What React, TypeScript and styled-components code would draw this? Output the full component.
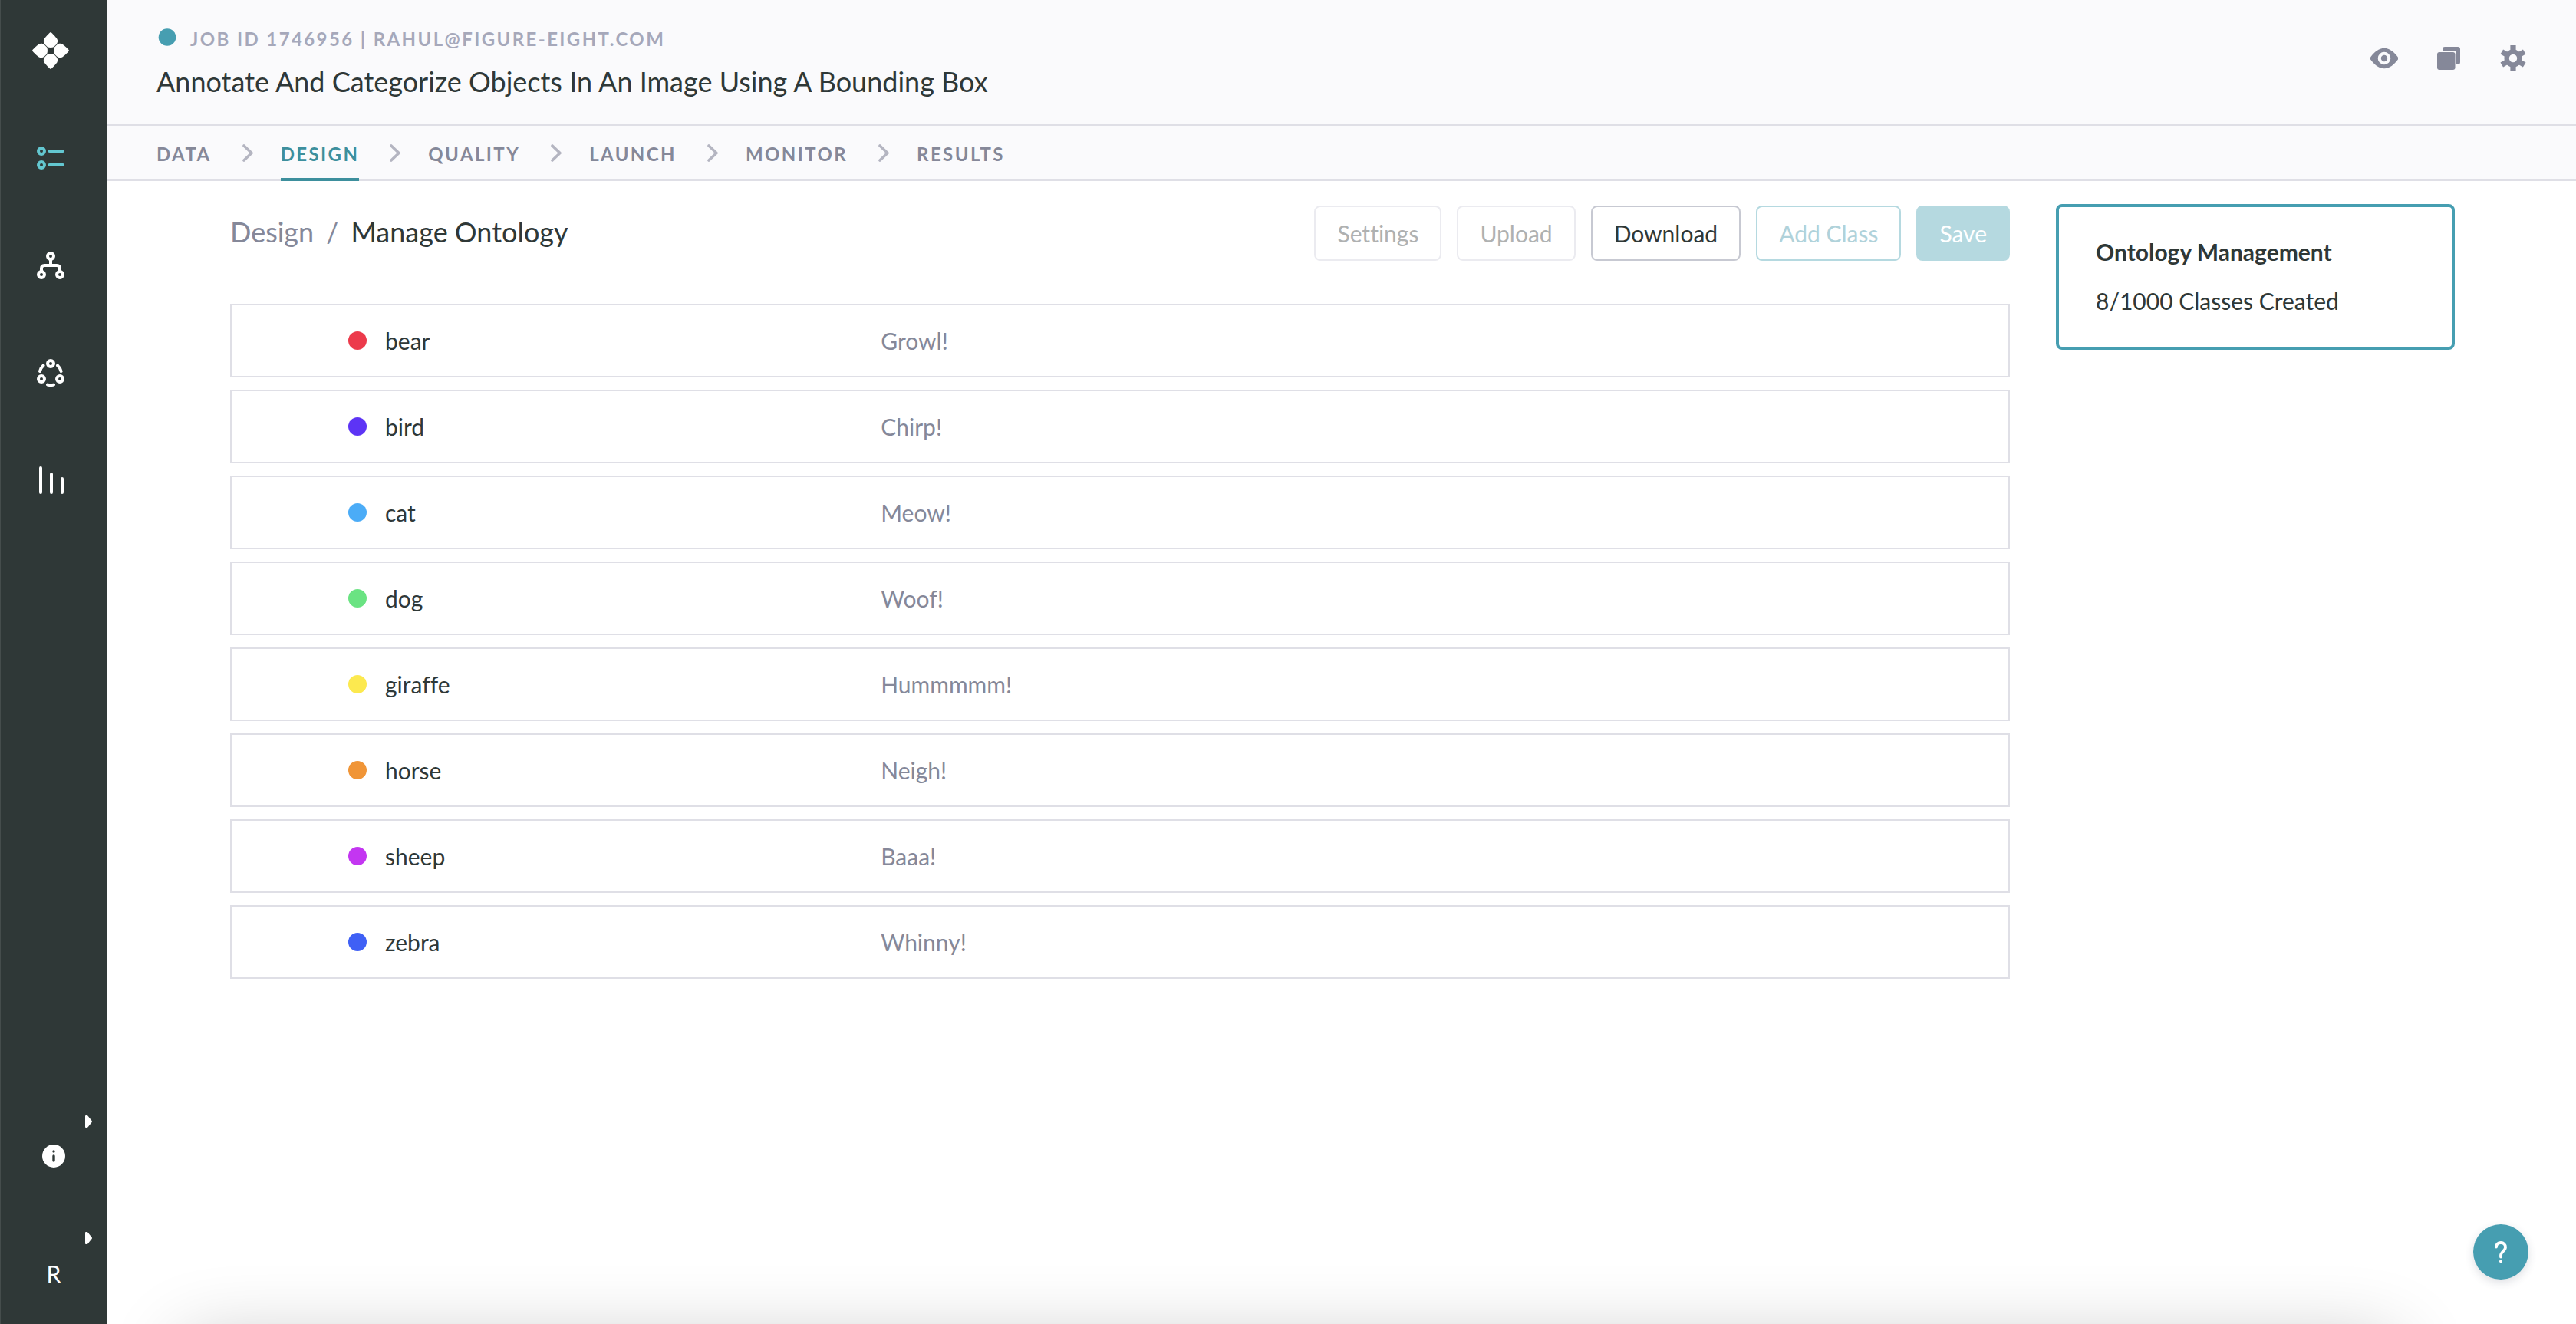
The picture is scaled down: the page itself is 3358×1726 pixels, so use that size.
import React from "react";
import styled, { createGlobalStyle } from "styled-components";

const color = {
  ink: "#2f3837",
  muted: "#858899",
  faint: "#a6a8ba",
  line: "#dfdfe6",
  chrome: "#fafafc",
  teal: "#469eb1",
  tealDark: "#3d8f9d",
  tealPale: "#b5d9e0",
  aqua: "#63c7d0",
};

const GlobalStyle = createGlobalStyle`
  *, *::before, *::after { box-sizing: border-box; }
  body {
    margin: 0;
    background: #fff;
    color: ${color.ink};
    font-family: Lato, "Liberation Sans", sans-serif;
    font-size: 30px;
    line-height: 36px;
    font-variant-ligatures: no-common-ligatures;
  }
  a { color: inherit; text-decoration: none; }
  button { font: inherit; font-variant-ligatures: inherit; cursor: pointer; }
  h1, h2, p, ul, ol { margin: 0; padding: 0; }
  ul, ol { list-style: none; }
  svg { display: block; }
`;

const Shell = styled.div`
  display: grid;
  grid-template-columns: 140px minmax(0, 1fr);
  min-height: 100vh;
`;

/* ---------- Sidebar ---------- */

const Sidebar = styled.aside`
  display: flex;
  flex-direction: column;
  justify-content: space-between;
  height: 100vh;
  position: sticky;
  top: 0;
  padding: 42px 0 50px;
  background: ${color.ink};
  box-shadow: inset 1px 0 #454d4c;
  color: #fff;
`;

const MainLinks = styled.nav`
  display: flex;
  flex-direction: column;
  align-items: center;
  gap: 104px;
  padding-right: 8px;
`;

const Brand = styled.a`
  margin-bottom: -6px;
`;

const SideLink = styled.a<{ $active?: boolean }>`
  color: ${(p) => (p.$active ? color.aqua : "#fff")};
`;

const Account = styled.div`
  display: flex;
  flex-direction: column;
  gap: 84px;
`;

const AccountButton = styled.button`
  display: grid;
  justify-items: center;
  gap: 22px;
  width: 100%;
  padding: 0;
  border: 0;
  background: none;
  color: #fff;
  line-height: 32px;
`;

const Caret = styled.svg`
  justify-self: end;
  margin-right: 20px;
`;

/* ---------- Header ---------- */

const Header = styled.header`
  display: flex;
  justify-content: space-between;
  padding: 36px 64px 34px;
  background: ${color.chrome};
  border-bottom: 2px solid ${color.line};
`;

const Heading = styled.div`
  display: flex;
  flex-direction: column;
  gap: 18px;
`;

const JobLine = styled.p`
  display: flex;
  gap: 16px;
  color: ${color.faint};
  font-size: 24px;
  font-weight: 700;
  line-height: 30px;
  letter-spacing: 0.1em;
`;

const Title = styled.h1`
  font-size: 36px;
  font-weight: 400;
  line-height: 44px;
`;

const HeaderActions = styled.div`
  display: flex;
  align-items: flex-start;
  gap: 48px;
  padding-top: 22px;
`;

const IconButton = styled.button`
  padding: 0;
  border: 0;
  background: none;
  color: ${color.muted};
`;

const Steps = styled.ol`
  display: flex;
  height: 72px;
  padding: 0 64px;
  background: ${color.chrome};
  box-shadow: inset 0 -2px ${color.line};
`;

const Step = styled.li`
  display: flex;
  align-items: center;
`;

const StepLink = styled.a<{ $active?: boolean }>`
  display: flex;
  align-items: center;
  height: 72px;
  padding-top: 6px;
  border-bottom: 4px solid ${(p) => (p.$active ? color.tealDark : "transparent")};
  color: ${(p) => (p.$active ? color.tealDark : color.muted)};
  font-size: 24px;
  font-weight: 700;
  line-height: 30px;
  letter-spacing: 0.1em;
`;

const StepArrow = styled.svg`
  margin: 0 36px 0 40px;
`;

/* ---------- Content ---------- */

const Main = styled.main`
  display: flex;
  align-items: flex-start;
  gap: 60px;
  padding: 30px 158px 120px 160px;
`;

const Ontology = styled.section`
  flex: 1;
  min-width: 0;
  padding-top: 2px;
`;

const Toolbar = styled.div`
  display: flex;
  align-items: baseline;
  justify-content: space-between;
  margin-bottom: 56px;
`;

const Crumbs = styled.nav`
  display: flex;
  gap: 16px;
  color: ${color.muted};
  font-size: 36px;
  line-height: 44px;
`;

const Current = styled.span`
  color: ${color.ink};
`;

const Actions = styled.div`
  display: flex;
  gap: 20px;
`;

type Tone = "quiet" | "plain" | "outline" | "solid";

const tones: Record<Tone, { text: string; edge: string; fill: string }> = {
  quiet: { text: "#afb1b1", edge: "#ebebf0", fill: "#fff" },
  plain: { text: color.ink, edge: "#c7c9d2", fill: "#fff" },
  outline: { text: "#b0d2da", edge: color.tealPale, fill: "#fff" },
  solid: { text: "#fff", edge: color.tealPale, fill: color.tealPale },
};

const Button = styled.button<{ $tone: Tone }>`
  height: 72px;
  padding: 0 28px;
  border: 2px solid ${(p) => tones[p.$tone].edge};
  border-radius: 8px;
  background: ${(p) => tones[p.$tone].fill};
  color: ${(p) => tones[p.$tone].text};
`;

const ClassList = styled.ul`
  display: grid;
  gap: 16px;
`;

const ClassRow = styled.li`
  display: grid;
  grid-template-columns: minmax(0, 19fr) minmax(0, 33fr);
  align-items: center;
  height: 96px;
  border: 2px solid ${color.line};
`;

const ClassName = styled.div`
  display: flex;
  align-items: center;
  gap: 24px;
  padding-left: 152px;
`;

const Swatch = styled.span<{ $fill: string }>`
  width: 24px;
  height: 24px;
  border-radius: 50%;
  background: ${(p) => p.$fill};
`;

const Description = styled.p`
  color: ${color.muted};
`;

const Summary = styled.aside`
  display: grid;
  gap: 28px;
  width: 520px;
  padding: 40px 48px 42px;
  border: 4px solid ${color.teal};
  border-radius: 8px;
`;

const SummaryTitle = styled.h2`
  font-size: 30px;
  font-weight: 700;
`;

/* ---------- Overlays ---------- */

const BottomShade = styled.div`
  position: fixed;
  left: 240px;
  right: 236px;
  bottom: -124px;
  height: 100px;
  box-shadow: 0 0 100px rgba(0, 0, 0, 0.24);
  pointer-events: none;
`;

const HelpButton = styled.button`
  position: fixed;
  right: 62px;
  bottom: 58px;
  display: grid;
  place-items: center;
  width: 72px;
  height: 72px;
  padding: 0;
  border: 0;
  border-radius: 50%;
  background: ${color.teal};
  box-shadow: 0 4px 12px rgba(48, 56, 80, 0.16);
`;

/* ---------- Icons ---------- */

const Logo = () => (
  <svg width="48" height="48" viewBox="0 0 48 48" fill="currentColor" aria-hidden="true">
    {[0, 90, 180, 270].map((turn) => (
      <path
        key={turn}
        transform={`rotate(${turn} 24 24)`}
        d="M24 0C25 0 31 6.6 32.4 8.8C33.7 10.9 33.4 13.6 31.4 16L28.4 19C26 20.300 22 20.300 19.600 19L16.6 16C14.6 13.6 14.3 10.9 15.6 8.8C17 6.6 23 0 24 0Z"
      />
    ))}
  </svg>
);

const ListIcon = () => (
  <svg width="36" height="36" viewBox="0 0 36 36" fill="none" stroke="currentColor" strokeWidth="4" aria-hidden="true">
    <circle cx="6" cy="9" r="4" />
    <circle cx="6" cy="27" r="4" />
    <path d="M16.500 9H34M16.500 27H34" strokeLinecap="round" />
  </svg>
);

const TreeIcon = () => (
  <svg width="36" height="36" viewBox="0 0 36 36" fill="none" stroke="currentColor" strokeWidth="4" aria-hidden="true">
    <circle cx="18" cy="6" r="4" />
    <circle cx="6" cy="30" r="4" />
    <circle cx="30" cy="30" r="4" />
    <path d="M18 10V18M6 26V22Q6 18 10 18H26Q30 18 30 22V26" />
  </svg>
);

const CycleIcon = () => (
  <svg width="36" height="36" viewBox="0 0 36 36" fill="none" stroke="currentColor" strokeWidth="4" aria-hidden="true">
    <circle cx="18" cy="6" r="4" />
    <circle cx="6" cy="26" r="4" />
    <circle cx="30" cy="26" r="4" />
    <path d="M8.500 8.500Q5 11.500 4 16M27 8.500Q30.500 11.500 31.600 16M14 33.600Q18 34.600 22 33.600" strokeLinecap="round" />
  </svg>
);

const BarsIcon = () => (
  <svg width="36" height="36" viewBox="0 0 36 36" fill="none" stroke="currentColor" strokeWidth="4" strokeLinecap="round" aria-hidden="true">
    <path d="M5 2V34M19 10V34M33 16V34" />
  </svg>
);

const InfoIcon = () => (
  <svg width="30" height="30" viewBox="0 0 30 30" aria-hidden="true">
    <circle cx="15" cy="15" r="15" fill="currentColor" />
    <circle cx="15" cy="9" r="1.700" fill={color.ink} />
    <path d="M15 15V21" stroke={color.ink} strokeWidth="3.400" strokeLinecap="round" />
  </svg>
);

const CaretIcon = () => (
  <Caret width="9" height="16" viewBox="0 0 9 16" fill="currentColor" aria-hidden="true">
    <path d="M0 1Q0 0 1 0H2Q3 0 3.600 .7L8.600 7Q9.300 8 8.600 9L3.600 15.300Q3 16 2 16H1Q0 16 0 15Z" />
  </Caret>
);

const EyeIcon = () => (
  <svg width="36" height="36" viewBox="0 0 36 36" aria-hidden="true">
    <path
      fill="currentColor"
      fillRule="evenodd"
      d="M18 4.700C25 4.700 31 10 35.500 16Q37 18 35.500 20C31 26 25 31.300 18 31.300S5 26 .5 20Q-1 18 .5 16C5 10 11 4.700 18 4.700ZM18 9.700A8.300 8.300 0 1 0 18 26.300A8.300 8.300 0 1 0 18 9.700ZM18 13.800A4.200 4.200 0 1 1 18 22.200A4.200 4.200 0 1 1 18 13.800Z"
    />
  </svg>
);

const CopyIcon = () => (
  <svg width="36" height="36" viewBox="0 0 36 36" fill="currentColor" aria-hidden="true">
    <rect x="3" y="10" width="23.500" height="23" rx="3" />
    <path d="M10 8V6Q10 3 13 3H30Q33 3 33 6V23Q33 26 30 26H28V11Q28 8 25 8Z" />
  </svg>
);

const GearIcon = () => (
  <svg width="36" height="36" viewBox="0 0 36 36" aria-hidden="true">
    <g fill="currentColor">
      {[0, 60, 120].map((turn) => (
        <rect key={turn} x="14.400" y="1" width="7.200" height="34" transform={`rotate(${turn} 18 18)`} />
      ))}
      <circle cx="18" cy="18" r="11.500" />
    </g>
    <circle cx="18" cy="18" r="5.200" fill={color.chrome} />
  </svg>
);

const HelpIcon = () => (
  <svg width="18" height="30" viewBox="0 0 18 30" fill="none" stroke="#fff" strokeWidth="3.800" strokeLinecap="round" aria-hidden="true">
    <path d="M3 8.500C3 5 5.500 3 9 3S15 5.300 15 9C15 13.500 9 15 9 19.500V21.500" />
    <circle cx="9" cy="27.200" r="2" fill="#fff" stroke="none" />
  </svg>
);

const StatusDot = () => (
  <svg width="28" height="26" viewBox="0 0 28 26" aria-hidden="true">
    <circle cx="14" cy="12.500" r="11.300" fill={color.teal} />
  </svg>
);

const StepChevron = () => (
  <StepArrow width="14" height="24" viewBox="0 0 14 24" fill="none" stroke="#b4b5c1" strokeWidth="3.600" strokeLinecap="round" aria-hidden="true">
    <path d="M2 2L12 11.500L2 21" strokeLinejoin="round" />
  </StepArrow>
);

/* ---------- Data ---------- */

const sideLinks = [
  { label: "Jobs", Icon: ListIcon, active: true },
  { label: "Workflows", Icon: TreeIcon },
  { label: "Models", Icon: CycleIcon },
  { label: "Reports", Icon: BarsIcon },
];

const headerActions = [
  { label: "Preview", Icon: EyeIcon },
  { label: "Copy job", Icon: CopyIcon },
  { label: "Job settings", Icon: GearIcon },
];

const steps = ["DATA", "DESIGN", "QUALITY", "LAUNCH", "MONITOR", "RESULTS"];

const actions: { label: string; tone: Tone }[] = [
  { label: "Settings", tone: "quiet" },
  { label: "Upload", tone: "quiet" },
  { label: "Download", tone: "plain" },
  { label: "Add Class", tone: "outline" },
  { label: "Save", tone: "solid" },
];

const classes = [
  { name: "bear", description: "Growl!", fill: "#ec3a4b" },
  { name: "bird", description: "Chirp!", fill: "#5d34f5" },
  { name: "cat", description: "Meow!", fill: "#4bacf7" },
  { name: "dog", description: "Woof!", fill: "#6ae382" },
  { name: "giraffe", description: "Hummmmm!", fill: "#fce94f" },
  { name: "horse", description: "Neigh!", fill: "#f09537" },
  { name: "sheep", description: "Baaa!", fill: "#c336f1" },
  { name: "zebra", description: "Whinny!", fill: "#3f60f5" },
];

export default function App() {
  return (
    <>
      <GlobalStyle />
      <Shell>
        <Sidebar>
          <MainLinks aria-label="Main">
            <Brand href="#" aria-label="Home">
              <Logo />
            </Brand>
            {sideLinks.map(({ label, Icon, active }) => (
              <SideLink key={label} href="#" aria-label={label} $active={active}>
                <Icon />
              </SideLink>
            ))}
          </MainLinks>
          <Account>
            <AccountButton aria-label="Information">
              <CaretIcon />
              <InfoIcon />
            </AccountButton>
            <AccountButton>
              <CaretIcon />
              <span>R</span>
            </AccountButton>
          </Account>
        </Sidebar>

        <div>
          <Header>
            <Heading>
              <JobLine>
                <StatusDot />
                <span>JOB ID 1746956 | RAHUL@FIGURE-EIGHT.COM</span>
              </JobLine>
              <Title>Annotate And Categorize Objects In An Image Using A Bounding Box</Title>
            </Heading>
            <HeaderActions>
              {headerActions.map(({ label, Icon }) => (
                <IconButton key={label} aria-label={label}>
                  <Icon />
                </IconButton>
              ))}
            </HeaderActions>
          </Header>

          <nav aria-label="Job steps">
            <Steps>
              {steps.map((step, i) => (
                <Step key={step}>
                  {i > 0 && <StepChevron />}
                  <StepLink href="#" $active={step === "DESIGN"}>
                    {step}
                  </StepLink>
                </Step>
              ))}
            </Steps>
          </nav>

          <Main>
            <Ontology>
              <Toolbar>
                <Crumbs aria-label="Breadcrumb">
                  <a href="#">Design</a>
                  <span>/</span>
                  <Current>Manage Ontology</Current>
                </Crumbs>
                <Actions>
                  {actions.map(({ label, tone }) => (
                    <Button key={label} type="button" $tone={tone}>
                      {label}
                    </Button>
                  ))}
                </Actions>
              </Toolbar>
              <ClassList>
                {classes.map(({ name, description, fill }) => (
                  <ClassRow key={name}>
                    <ClassName>
                      <Swatch $fill={fill} />
                      {name}
                    </ClassName>
                    <Description>{description}</Description>
                  </ClassRow>
                ))}
              </ClassList>
            </Ontology>
            <Summary>
              <SummaryTitle>Ontology Management</SummaryTitle>
              <p>8/1000 Classes Created</p>
            </Summary>
          </Main>
        </div>
      </Shell>
      <BottomShade />
      <HelpButton aria-label="Help">
        <HelpIcon />
      </HelpButton>
    </>
  );
}
